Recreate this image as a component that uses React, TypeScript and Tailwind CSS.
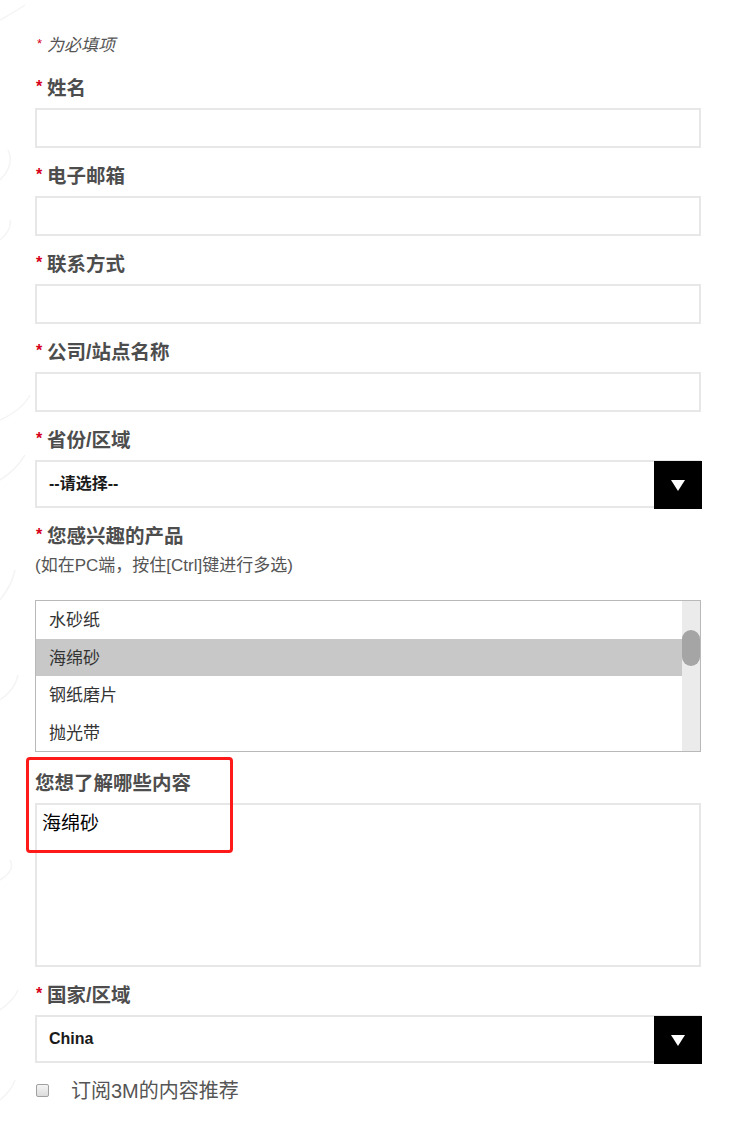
import React from "react";

const font = { fontFamily: '"Liberation Sans", "Noto Sans CJK SC", sans-serif' };

function Label({ text, required = true }: { text: string; required?: boolean }) {
  return (
    <div className="flex items-center h-[24px] leading-[24px]">
      {required && <span className="text-[#d7001a] text-[16px] font-bold w-[12px] pl-[1px] -mt-[1px]">*</span>}
      <span className="text-[19.5px] font-bold text-[#4d4d4d] pt-[1px]">{text}</span>
    </div>
  );
}

function TextInput() {
  return <div className="mt-[9px] h-[40px] border-2 border-[#e7e7e7] bg-white" />;
}

function Select({ value }: { value: string }) {
  return (
    <div className="mt-[9px] h-[48px] border-2 border-[#e7e7e7] bg-white flex items-center relative">
      <span className="pl-[12px] text-[16px] font-bold text-[#1a1a1a]">{value}</span>
      <div className="absolute right-[-3px] top-[-1px] w-[48px] h-[48px] bg-black flex items-center justify-center">
        <svg width="16" height="14" viewBox="0 0 16 14">
          <polygon points="1,2 15,2 8,13" fill="white" />
        </svg>
      </div>
    </div>
  );
}

export default function App() {
  const items = ["水砂纸", "海绵砂", "钢纸磨片", "抛光带"];
  return (
    <div className="relative w-[738px] h-[1125px] bg-white overflow-hidden" style={font}>
      <svg className="absolute left-0 top-0" width="40" height="1125" viewBox="0 0 40 1125">
        <g fill="none" stroke="#f4f4f4" strokeWidth="1.5">
          <path d="M0 20 Q 18 10 25 5" />
          <path d="M0 180 Q 15 165 8 150" />
          <path d="M0 240 Q 12 230 10 220" />
          <path d="M0 420 Q 22 410 30 395" />
          <path d="M0 480 Q 16 470 25 455" />
          <path d="M0 600 Q 12 585 15 570" />
          <path d="M0 700 Q 15 690 18 675" />
          <path d="M0 880 Q 16 870 10 860" />
          <path d="M0 1010 Q 14 1000 18 990" />
          <path d="M0 1100 Q 12 1090 15 1080" />
        </g>
      </svg>
      <div className="relative pl-[35px] pr-[37px] pt-[35px] flex flex-col">
        <div className="flex items-center h-[20px] leading-[20px]">
          <span className="text-[#d7001a] text-[13px] w-[12px] pl-[2px] -mt-[2px]">*</span>
          <span className="italic text-[17px] text-[#555] pt-[1px]">为必填项</span>
        </div>

        <div className="mt-[20px]">
          <Label text="姓名" />
          <TextInput />
        </div>
        <div className="mt-[15px]">
          <Label text="电子邮箱" />
          <TextInput />
        </div>
        <div className="mt-[15px]">
          <Label text="联系方式" />
          <TextInput />
        </div>
        <div className="mt-[15px]">
          <Label text="公司/站点名称" />
          <TextInput />
        </div>
        <div className="mt-[15px]">
          <Label text="省份/区域" />
          <Select value="--请选择--" />
        </div>
        <div className="mt-[15px]">
          <Label text="您感兴趣的产品" />
          <div className="mt-[8px] h-[20px] leading-[20px] text-[17px] text-[#555] pt-[1px]">(如在PC端，按住[Ctrl]键进行多选)</div>
          <div className="mt-[25px] h-[152px] border border-[#b9b9b9] flex bg-white">
            <div className="flex-1 flex flex-col">
              {items.map((it, i) => (
                <div
                  key={it}
                  className={`h-[37.5px] flex items-center pl-[13px] pt-[2px] text-[17px] text-[#333] ${i === 1 ? "bg-[#c8c8c8]" : ""}`}
                >
                  {it}
                </div>
              ))}
            </div>
            <div className="w-[18px] bg-[#ebebeb] pt-[29px]">
              <div className="h-[36px] rounded-[9px] bg-[#a5a5a5]" />
            </div>
          </div>
        </div>
        <div className="mt-[18px] relative">
          <Label text="您想了解哪些内容" required={false} />
          <div className="mt-[9px] h-[164px] border-2 border-[#e7e7e7] bg-white pl-[5px] pt-[5px]">
            <span className="text-[19px] text-black">海绵砂</span>
          </div>
          <div className="absolute left-[-9px] top-[-13px] w-[207px] h-[96px] border-[3px] border-[#ff1a1a] rounded-[4px]" />
        </div>
        <div className="mt-[15px]">
          <Label text="国家/区域" />
          <Select value="China" />
        </div>
        <div className="mt-[14px] flex items-center h-[26px]">
          <div className="w-[13px] h-[13px] ml-[1px] rounded-[2px] border border-[#a0a0a0] bg-gradient-to-b from-[#f4f4f4] to-[#dcdcdc]" />
          <span className="ml-[22px] text-[20px] text-[#555] pt-[1px]">订阅3M的内容推荐</span>
        </div>
      </div>
    </div>
  );
}
